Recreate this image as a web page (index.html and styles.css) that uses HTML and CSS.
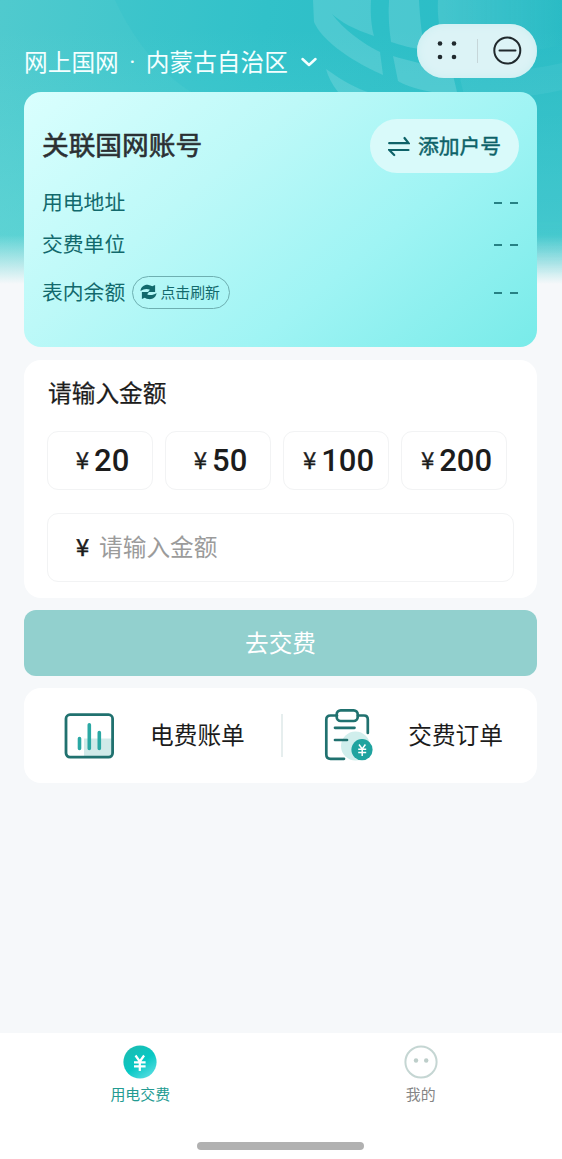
FILE: index.html
```
<!DOCTYPE html>
<html lang="zh-CN">
<head>
<meta charset="utf-8">
<meta name="viewport" content="width=device-width">
<title>网上国网</title>
<link rel="stylesheet" href="styles.css">
</head>
<body>
<div class="app">
  <svg class="backdrop" viewBox="0 0 562 290" aria-hidden="true">
    <defs><linearGradient id="haze"><stop offset="0" stop-color="#fff" stop-opacity=".12"/><stop offset="1" stop-color="#fff" stop-opacity="0"/></linearGradient></defs>
    <path d="M115 0C137 47 165 76 193 93L204 290H562V0Z" fill="#22b8c4" opacity=".16"/>
    <g fill="#fff" opacity=".14">
      <path d="M313 0H371C370 16 372 29 374 36C353 29 341 22 332 14C343 29 362 43 380 52L383 75C345 58 321 38 314 22Z"/>
      <path d="M389 0H419C420 19 422 38 425 50C411 48 400 45 391 42C389 28 388 14 389 0Z"/>
      <path d="M393 56C418 64 448 68 453 75L457 92H432C415 89 402 84 398 81Z"/>
      <path d="M326 69C344 82 358 89 368 92H338C332 84 328 77 326 69Z"/>
      <path d="M459 74C500 74 535 69 562 63V90C530 98 492 99 464 95Z" opacity=".35"/>
    </g>
    <path d="M438 0H562V45C513 56 474 57 446 53C440 36 437 18 438 0Z" fill="url(#haze)"/>
  </svg>

  <header class="topbar">
    <div class="region"><span>网上国网</span><span class="dot">·</span><span>内蒙古自治区</span>
      <svg class="chevron" viewBox="0 0 18 12"><path d="M2.500 3L9 9l6.500-6"/></svg>
    </div>
    <div class="capsule">
      <svg viewBox="0 0 120 54">
        <g fill="#20292d"><circle cx="23" cy="19.500" r="2.300"/><circle cx="37" cy="19.500" r="2.300"/><circle cx="23" cy="33" r="2.300"/><circle cx="37" cy="33" r="2.300"/></g>
        <path d="M60.500 15v24" stroke="#c6d6d9" stroke-width="1"/>
        <g fill="none" stroke="#20292d" stroke-width="2" stroke-linecap="round"><circle cx="90.300" cy="26.500" r="13"/><path d="M82.500 26.500h16"/></g>
      </svg>
    </div>
  </header>

  <main class="content">
    <section class="account">
      <div class="account-head">
        <h1>关联国网账号</h1>
        <button class="add">
          <svg viewBox="0 0 22 22"><path d="M1.200 8.200h19.300L16.500 3M20.500 15h-19.300l5 5"/></svg>
          <span>添加户号</span>
        </button>
      </div>
      <div class="row"><span>用电地址</span><i class="dashes"></i></div>
      <div class="row"><span>交费单位</span><i class="dashes"></i></div>
      <div class="row row-balance">
        <span>表内余额</span>
        <button class="refresh">
          <svg viewBox="0 0 18 18">
            <path d="M.500 8C1 3.500 4.500 1 9 1.500q2 .300 4 1.500L16 1.500V9H8.500l2-2.300C7.500 5 4 5.500 .500 8Z"/>
            <path d="M17.500 10c-.500 4.500-4 7-8.500 6.500q-2-.300-4-1.500L2 16.500V9h7.500l-2 2.300c3 1.700 6.500 1.200 10-1.300Z"/>
          </svg>
          <span>点击刷新</span>
        </button>
        <i class="dashes"></i>
      </div>
    </section>

    <section class="amount">
      <h2>请输入金额</h2>
      <div class="choices">
        <button><small>¥</small><b>20</b></button>
        <button><small>¥</small><b>50</b></button>
        <button><small>¥</small><b>100</b></button>
        <button><small>¥</small><b>200</b></button>
      </div>
      <div class="field"><span class="yen">¥</span><span class="hint">请输入金额</span></div>
    </section>

    <button class="pay"><span>去交费</span></button>

    <nav class="links">
      <a class="link">
        <svg class="icon-bill" viewBox="0 0 50 46">
          <path d="M20 25.500h28V44H20Z" fill="#d0eae9"/>
          <rect x="2" y="1.700" width="46.600" height="42.400" rx="4" fill="none" stroke="#20716f" stroke-width="2.800"/>
          <path d="M15.500 25.500v10M25.300 11.800v23.700M35.300 19.500v16" stroke="#2ba8a4" stroke-width="3.600" stroke-linecap="round"/>
        </svg>
        <span>电费账单</span>
      </a>
      <i class="divider"></i>
      <a class="link order">
        <svg class="icon-order" viewBox="0 0 50 54">
          <circle cx="31.500" cy="38" r="14.500" fill="#d0eeec"/>
          <g fill="none" stroke="#20716f" stroke-width="2.700" stroke-linecap="round" stroke-linejoin="round">
            <path d="M13 7.500H6.500Q2.300 7.500 2.300 11.700V46.500Q2.300 50.800 6.500 50.800H20M34 7.500h6q3.800 0 3.800 4V25"/>
            <rect x="12.700" y="2.300" width="21" height="10.700" rx="4"/>
            <path d="M11 19.800h19.500M11 32h12"/>
          </g>
          <circle cx="38" cy="41.700" r="10.600" fill="#1fa39f"/>
          <path d="M35 36.500l3.200 4.500 3.200-4.500M38.200 41v7M34.200 41.300h8M34.200 44.500h8" fill="none" stroke="#fff" stroke-width="1.500"/>
        </svg>
        <span>交费订单</span>
      </a>
    </nav>
  </main>

  <footer class="tabbar">
    <div class="tabs">
      <a class="tab active">
        <svg viewBox="0 0 34 34">
          <defs><linearGradient id="coin" x1="0" y1="0" x2=".7" y2="1"><stop offset="0" stop-color="#1fb9ad"/><stop offset=".6" stop-color="#08c8c4"/><stop offset="1" stop-color="#52dce0"/></linearGradient></defs>
          <circle cx="17" cy="17" r="16.600" fill="url(#coin)"/>
          <path d="M12.500 10.500l4.300 6 4.300-6M16.800 16v10M11 17.300h11.600M11 21.300h11.600" fill="none" stroke="#fff" stroke-width="2.200"/>
        </svg>
        <span>用电交费</span>
      </a>
      <a class="tab">
        <svg viewBox="0 0 34 34"><circle cx="17" cy="17" r="15.600" fill="#fff" stroke="#c5d6d3" stroke-width="2"/><circle cx="12" cy="15.500" r="2.200" fill="#bdceca"/><circle cx="22.200" cy="15.500" r="2.200" fill="#bdceca"/></svg>
        <span>我的</span>
      </a>
    </div>
    <div class="home-bar"></div>
  </footer>
</div>
</body>
</html>
```
FILE: styles.css
```
* { box-sizing: border-box; }
body { margin: 0; font-family: "Noto Sans CJK SC", sans-serif; color: #1c1c1c; }
button { font: inherit; color: inherit; border: 0; padding: 0; background: none; }
h1, h2 { margin: 0; font-weight: 400; }
svg { display: block; flex: none; }
span { white-space: nowrap; }

.app {
  position: relative;
  height: 1159px;
  display: flex;
  flex-direction: column;
  overflow: hidden;
  background:
    linear-gradient(180deg, rgba(246,248,250,0) 235px, #f6f8fa 284px),
    linear-gradient(180deg, rgba(116,224,221,0) 30px, rgba(116,224,221,.5) 280px),
    linear-gradient(100deg, #50cace 0, #35c3ca 35%, #2dbdc6 65%, #2ebac4 100%);
}
.backdrop {
  position: absolute;
  inset: 0 0 auto 0;
  width: 562px;
  height: 290px;
  -webkit-mask-image: linear-gradient(#000 220px, transparent 275px);
  mask-image: linear-gradient(#000 220px, transparent 275px);
}

.topbar {
  position: relative;
  height: 92px;
  padding: 24px 25px 0 24px;
  display: flex;
  justify-content: space-between;
  align-items: flex-start;
}
.region {
  display: flex;
  align-items: center;
  height: 54px;
  padding-top: 20px;
  color: #f4ffff;
  font-size: 23.7px;
  line-height: 32px;
}
.dot { width: 27px; padding-top: 2px; text-align: center; font-family: Roboto, sans-serif; }
.chevron { width: 18px; height: 12px; margin: 2px 0 0 12px; fill: none; stroke: #f4ffff; stroke-width: 2.5; stroke-linecap: round; stroke-linejoin: round; }
.capsule { width: 120px; height: 54px; border-radius: 27px; background: #dcf3f6; box-shadow: inset 0 0 8px #c9eef1; }

.content {
  position: relative;
  padding: 0 25px 0 24px;
  display: flex;
  flex-direction: column;
}
.account {
  height: 255px;
  padding: 27px 18px 0;
  border-radius: 17px;
  background: linear-gradient(140deg, #dafffe 0%, #bdf9f8 35%, #9ff4f4 65%, #78ebe9 100%);
  color: #12696c;
}
.account-head { height: 54px; display: flex; align-items: center; justify-content: space-between; }
h1 { padding-bottom: 4px; font-size: 26.7px; line-height: 36px; color: #2b3033; -webkit-text-stroke: .6px #2b3033; }
.add {
  width: 149px;
  height: 54px;
  border-radius: 27px;
  background: #d9fafa;
  display: flex;
  align-items: center;
  justify-content: center;
  gap: 8px;
  font-size: 20.8px;
  color: #0d6268;
  -webkit-text-stroke: .45px #0d6268;
}
.add span { padding-bottom: 2px; }
.add svg { width: 22px; height: 22px; fill: none; stroke: #0d6268; stroke-width: 2.2; stroke-linecap: round; }
.row { height: 42px; display: flex; align-items: center; font-size: 20.8px; }
.row > span { padding-bottom: 4px; }
.account-head + .row { margin-top: 9px; }
.row-balance { height: 54px; }
.dashes { margin-left: auto; margin-right: 1px; width: 24px; height: 2px; background: linear-gradient(90deg, #278184 8px, transparent 8px 16px, #278184 16px); }
.refresh {
  width: 98px;
  height: 33px;
  margin: 0 0 2px 7px;
  border: 1.5px solid #6eafb1;
  border-radius: 17px;
  display: flex;
  align-items: center;
  justify-content: center;
  gap: 3px;
  padding-right: 2px;
  font-size: 14.9px;
}
.refresh span { padding-bottom: 1px; }
.refresh svg { width: 17px; height: 18px; fill: #12696c; }

.amount {
  height: 238px;
  margin-top: 13px;
  padding: 15px 23px 0;
  border-radius: 17px;
  background: #fff;
}
h2 { font-size: 23.7px; line-height: 34px; padding-left: 1px; -webkit-text-stroke: .25px #1c1c1c; }
.choices { margin-top: 22px; display: flex; gap: 12px; }
.choices button {
  width: 106px;
  height: 59px;
  border: 1px solid #f2f3f4;
  border-radius: 11px;
  display: flex;
  align-items: center;
  justify-content: center;
  gap: 5px;
  padding-left: 5px;
}
.choices small { font-size: 24px; line-height: 32px; padding-bottom: 4px; -webkit-text-stroke: .3px #1c1c1c; }
.choices b { font: 500 31px/36px Roboto, sans-serif; }
.field {
  width: 467px;
  height: 69px;
  margin-top: 23px;
  padding: 0 0 3px 28px;
  border: 1px solid #f2f3f4;
  border-radius: 11px;
  display: flex;
  align-items: center;
  font-size: 23.7px;
}
.yen { width: 23px; -webkit-text-stroke: .5px #1c1c1c; }
.hint { color: #9b9b9b; }

.pay {
  height: 66px;
  margin-top: 12px;
  padding-bottom: 2px;
  border-radius: 12px;
  background: #92d0ce;
  color: #fff;
  font-size: 23.7px;
  line-height: 64px;
}
.links {
  height: 95px;
  margin-top: 12px;
  padding: 0 34px 0 40px;
  border-radius: 17px;
  background: #fff;
  display: flex;
  align-items: center;
}
.link { display: flex; align-items: center; gap: 36px; font-size: 23.7px; }
.link span { padding-bottom: 3px; }
.link.order { gap: 34px; margin-left: auto; }
.icon-bill { width: 50px; height: 46px; }
.icon-order { width: 50px; height: 54px; margin-bottom: 1px; }
.divider { width: 2px; height: 43px; margin-left: 36px; background: #e6eeee; }

.tabbar { position: relative; height: 126px; margin-top: auto; background: #fff; display: flex; flex-direction: column; align-items: center; }
.tabs { width: 100%; height: 109px; padding-right: 1px; display: flex; }
.tab { flex: 1; display: flex; flex-direction: column; align-items: center; padding-top: 12px; color: #858585; font-size: 14.9px; line-height: 22px; }
.tab svg { width: 34px; height: 34px; margin-bottom: 4px; }
.tab.active { color: #239b92; }
.home-bar { width: 167px; height: 8px; margin-right: 1px; border-radius: 4px; background: #b1b1b1; }
```
